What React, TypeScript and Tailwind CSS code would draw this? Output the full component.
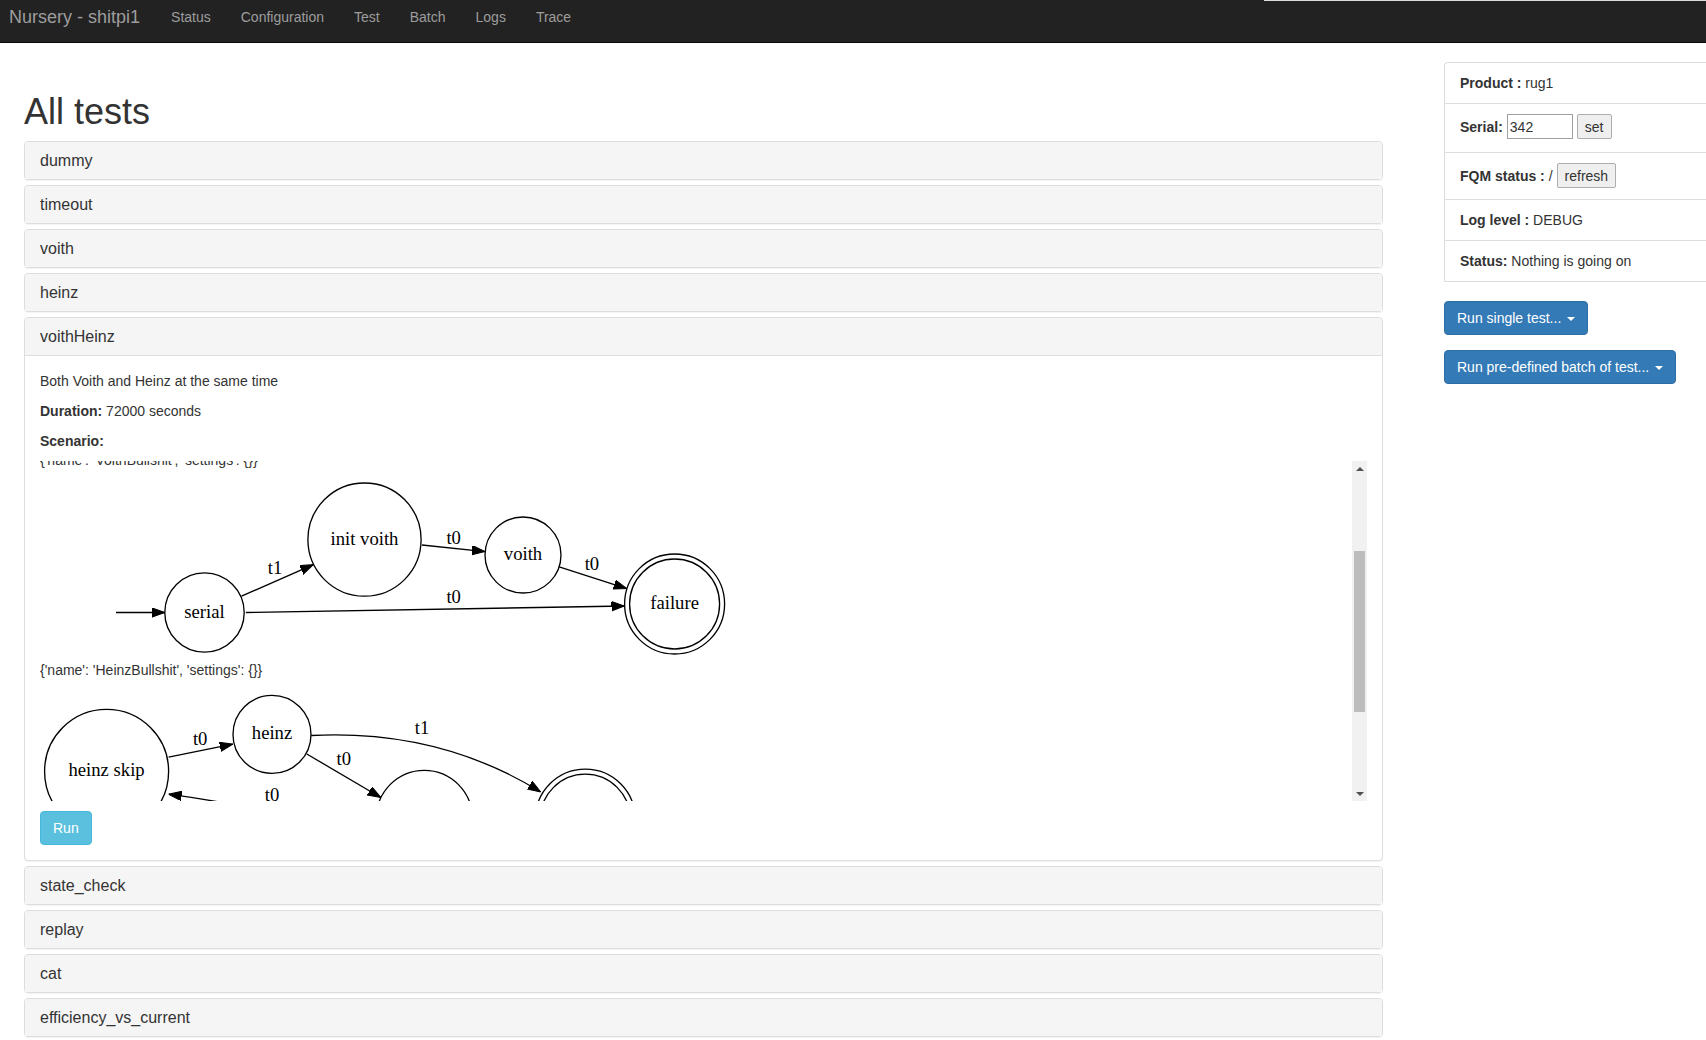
import { useLayoutEffect, useRef } from "react";

const tests = ["dummy", "timeout", "voith", "heinz", "voithHeinz", "state_check", "replay", "cat", "efficiency_vs_current"];

const Arrow = ({ id }: { id: string }) => (
  <defs>
    <marker id={id} markerWidth="13" markerHeight="10" refX="13" refY="4.7" orient="auto" markerUnits="userSpaceOnUse">
      <polygon points="0 0, 13 4.7, 0 9.4" fill="#000" stroke="#000" strokeWidth="1" />
    </marker>
  </defs>
);

const Node = ({ x, y, r, label, final }: { x: number; y: number; r: number; label: string; final?: boolean }) => (
  <g>
    <circle cx={x} cy={y} r={r} fill="none" stroke="#000" strokeWidth="1.33" />
    {final && <circle cx={x} cy={y} r={r - 5} fill="none" stroke="#000" strokeWidth="1.33" />}
    <text x={x} y={y + 5} textAnchor="middle" fontSize="18.67" fontFamily="'Liberation Serif', serif" fill="#000">
      {label}
    </text>
  </g>
);

const Label = ({ x, y, t }: { x: number; y: number; t: string }) => (
  <text x={x} y={y + 6} textAnchor="middle" fontSize="18.67" fontFamily="'Liberation Serif', serif" fill="#000">
    {t}
  </text>
);

// graphe du scenario serial (au dessus, cache par le scroll)
const SerialGraph = () => (
  <svg width="520" height="127" className="block">
    <Arrow id="arr-s" />
    <line x1="20" y1="62" x2="85" y2="62" stroke="#000" strokeWidth="1.33" markerEnd="url(#arr-s)" />
    <Node x={125} y={62} r={40} label="serial" />
    <line x1="165" y1="62" x2="300" y2="62" stroke="#000" strokeWidth="1.33" markerEnd="url(#arr-s)" />
    <Label x={232} y={48} t="t0" />
    <Node x={350} y={62} r={50} label="done" final />
  </svg>
);

const VoithGraph = () => (
  <svg width="720" height="190" className="block">
    <Arrow id="arr-v" />
    <line x1="76" y1="142.5" x2="124.8" y2="142.5" stroke="#000" strokeWidth="1.33" markerEnd="url(#arr-v)" />
    <Node x={164.5} y={142.5} r={39.7} label="serial" />
    <Node x={324.5} y={69.6} r={56.6} label="init voith" />
    <Node x={483} y={85} r={38} label="voith" />
    <Node x={634.6} y={134} r={50} label="failure" final />
    <line x1="201.5" y1="126.2" x2="273.3" y2="94.7" stroke="#000" strokeWidth="1.33" markerEnd="url(#arr-v)" />
    <Label x={235} y={98} t="t1" />
    <line x1="382" y1="75" x2="445" y2="81.6" stroke="#000" strokeWidth="1.33" markerEnd="url(#arr-v)" />
    <Label x={413.7} y={67.5} t="t0" />
    <line x1="519.2" y1="96.8" x2="586.7" y2="118.6" stroke="#000" strokeWidth="1.33" markerEnd="url(#arr-v)" />
    <Label x={551.9} y={93.6} t="t0" />
    <line x1="205.9" y1="142.5" x2="584.5" y2="136" stroke="#000" strokeWidth="1.33" markerEnd="url(#arr-v)" />
    <Label x={413.7} y={127.3} t="t0" />
  </svg>
);

const HeinzGraph = () => (
  <svg width="720" height="278" className="block">
    <Arrow id="arr-h" />
    <Node x={66.6} y={91.4} r={62} label="heinz skip" />
    <Node x={232} y={54.4} r={39} label="heinz" />
    <Node x={384.3} y={138.3} r={48} label="heinz ok" />
    <Node x={545.3} y={139.2} r={50} label="failure" final />
    <line x1="128.6" y1="77.2" x2="192.8" y2="64.2" stroke="#000" strokeWidth="1.33" markerEnd="url(#arr-h)" />
    <Label x={160.2} y={58.8} t="t0" />
    <line x1="266.8" y1="74" x2="340.8" y2="117.5" stroke="#000" strokeWidth="1.33" markerEnd="url(#arr-h)" />
    <Label x={303.8} y={79.4} t="t0" />
    <path d="M271.2,55.5 C340,52 420,62 500.7,112" fill="none" stroke="#000" strokeWidth="1.33" markerEnd="url(#arr-h)" />
    <Label x={382} y={48} t="t1" />
    <path d="M345,165 C280,140 200,124 128.6,114.2" fill="none" stroke="#000" strokeWidth="1.33" markerEnd="url(#arr-h)" />
    <Label x={232} y={115.3} t="t0" />
  </svg>
);

const Scenario = () => {
  const ref = useRef<HTMLDivElement>(null);

  // position du scroll comme sur la page
  useLayoutEffect(() => {
    if (ref.current) ref.current.scrollTop = 158;
  }, []);

  return (
    <div className="flex h-[340px]">
      <div ref={ref} className="flex-1 overflow-hidden">
        <p className="leading-[20px]">{"{'name': 'SerialNumber', 'settings': {}}"}</p>
        <SerialGraph />
        <p className="leading-[20px]">{"{'name': 'VoithBullshit', 'settings': {}}"}</p>
        <VoithGraph />
        <p className="leading-[20px]">{"{'name': 'HeinzBullshit', 'settings': {}}"}</p>
        <HeinzGraph />
      </div>
      {/* barre de defilement */}
      <div className="flex w-[15px] flex-col items-center bg-[#f1f1f1]">
        <div className="flex h-[15px] items-center justify-center">
          <span className="h-0 w-0 border-x-[4px] border-b-[4px] border-x-transparent border-b-[#505050]" />
        </div>
        <div className="flex-1">
          <div className="mt-[75px] h-[161px] w-[11px] bg-[#bdbdbd]" />
        </div>
        <div className="flex h-[15px] items-center justify-center">
          <span className="h-0 w-0 border-x-[4px] border-t-[4px] border-x-transparent border-t-[#505050]" />
        </div>
      </div>
    </div>
  );
};

const Panel = ({ title, open }: { title: string; open?: boolean }) => (
  <div className="rounded border border-[#ddd] bg-white shadow-[0_1px_1px_rgba(0,0,0,0.05)]">
    <div className="rounded-t bg-[#f5f5f5] px-[15px] py-[10px] text-[16px] leading-[17px] text-[#333]">{title}</div>
    {open && (
      <div className="border-t border-[#ddd] p-[15px] text-[14px] leading-[20px] text-[#333]">
        <p className="mb-[10px]">Both Voith and Heinz at the same time</p>
        <p className="mb-[10px]">
          <b>Duration:</b> 72000 seconds
        </p>
        <p className="mb-[10px]">
          <b>Scenario:</b>
        </p>
        <Scenario />
        <button className="mt-[10px] h-[34px] rounded border border-[#46b8da] bg-[#5bc0de] px-[12px] text-[14px] text-white">
          Run
        </button>
      </div>
    )}
  </div>
);

const Caret = () => (
  <span className="ml-[2px] inline-block h-0 w-0 border-x-[4px] border-t-[4px] border-x-transparent border-t-white align-middle" />
);

export default function App() {
  return (
    <div className="min-h-screen bg-white font-['Liberation_Sans',Arial,sans-serif] text-[#333]">
      <div className="absolute right-0 top-0 h-px w-[442px] bg-[#ddd]" />
      <nav className="flex h-[43px] items-start border-b border-[#080808] bg-[#222] pt-[7px]">
        <a className="ml-[9px] text-[18px] leading-[20px] text-[#9d9d9d]">Nursery - shitpi1</a>
        <ul className="ml-[16px] flex">
          {["Status", "Configuration", "Test", "Batch", "Logs", "Trace"].map((item) => (
            <li key={item} className="px-[15px] text-[14px] leading-[20px] text-[#9d9d9d]">
              {item}
            </li>
          ))}
        </ul>
      </nav>

      <div className="flex">
        <div className="ml-[24px] w-[1359px] pt-[49px]">
          <h1 className="mb-[9px] text-[36px] leading-[40px] text-[#333]">All tests</h1>
          <div className="flex flex-col gap-[5px]">
            {tests.map((t) => (
              <Panel key={t} title={t} open={t === "voithHeinz"} />
            ))}
          </div>
        </div>

        <div className="ml-[61px] flex-1 pt-[19px] text-[14px] leading-[20px]">
          <div className="divide-y divide-[#ddd] rounded-tl border border-r-0 border-[#ddd]">
            <div className="px-[15px] py-[10px]">
              <b>Product :</b> rug1
            </div>
            <div className="px-[15px] py-[10px]">
              <div className="flex h-[28px] items-start">
                <div className="flex h-[25px] items-center">
                  <b>Serial:</b>
                  <input
                    defaultValue="342"
                    className="ml-[4px] h-[25px] w-[66px] border border-[#a0a0a0] px-[2px] text-[14px] outline-none"
                  />
                  <button className="ml-[4px] h-[25px] rounded-[2px] border border-[#adadad] bg-[#efefef] px-[7px] text-[14px]">
                    set
                  </button>
                </div>
              </div>
            </div>
            <div className="px-[15px] py-[10px]">
              <div className="flex h-[26px] items-start">
                <div className="flex h-[25px] items-center">
                  <b>FQM status :</b>&nbsp;/
                  <button className="ml-[4px] h-[25px] rounded-[2px] border border-[#adadad] bg-[#efefef] px-[7px] text-[14px]">
                    refresh
                  </button>
                </div>
              </div>
            </div>
            <div className="px-[15px] py-[10px]">
              <b>Log level :</b> DEBUG
            </div>
            <div className="px-[15px] py-[10px]">
              <b>Status:</b> Nothing is going on
            </div>
          </div>

          <div className="mt-[19px] flex flex-col items-start gap-[15px]">
            <button className="h-[34px] rounded border border-[#2e6da4] bg-[#337ab7] px-[12px] text-[14px] text-white">
              Run single test... <Caret />
            </button>
            <button className="h-[34px] rounded border border-[#2e6da4] bg-[#337ab7] px-[12px] text-[14px] text-white">
              Run pre-defined batch of test... <Caret />
            </button>
          </div>
        </div>
      </div>
    </div>
  );
}
